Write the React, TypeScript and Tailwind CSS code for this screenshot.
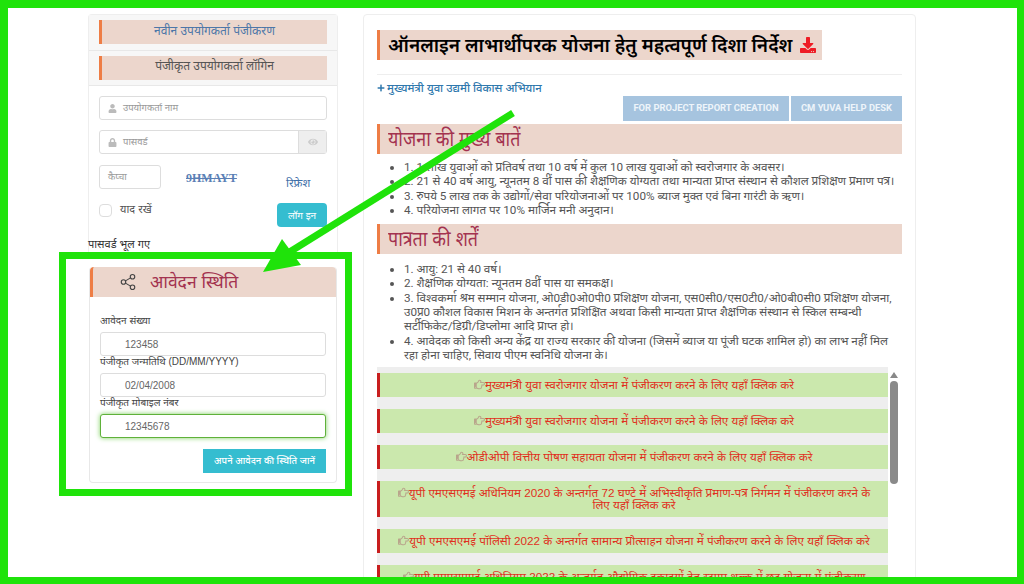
import { Share2 } from "lucide-react";
import { FaDownload, FaEye, FaLock, FaPlus, FaRegHandPointRight, FaUser } from "react-icons/fa";

const rows = [
  "मुख्यमंत्री युवा स्वरोजगार योजना में पंजीकरण करने के लिए यहाँ क्लिक करे",
  "मुख्यमंत्री युवा स्वरोजगार योजना में पंजीकरण करने के लिए यहाँ क्लिक करे",
  "ओडीओपी वित्तीय पोषण सहायता योजना में पंजीकरण करने के लिए यहाँ क्लिक करे",
  "यूपी एमएसएमई अधिनियम 2020 के अन्तर्गत 72 घण्टे में अभिस्वीकृति प्रमाण-पत्र निर्गमन में पंजीकरण करने के लिए यहाँ क्लिक करे",
  "यूपी एमएसएमई पॉलिसी 2022 के अन्तर्गत सामान्य प्रोत्साहन योजना में पंजीकरण करने के लिए यहाँ क्लिक करे",
  "यूपी एमएसएमई अधिनियम 2022 के अन्तर्गत औद्योगिक इकाइयों हेतु स्टाम्प शुल्क में छूट योजना में पंजीकरण करने",
];

const points = [
  "1. 1 लाख युवाओं को प्रतिवर्ष तथा 10 वर्ष में कुल 10 लाख युवाओं को स्वरोजगार के अवसर।",
  "2. 21 से 40 वर्ष आयु, न्यूनतम 8 वीं पास की शैक्षणिक योग्यता तथा मान्यता प्राप्त संस्थान से कौशल प्रशिक्षण प्रमाण पत्र।",
  "3. रुपये 5 लाख तक के उद्योगों/सेवा परियोजनाओं पर 100% ब्याज मुक्त एवं बिना गारंटी के ऋण।",
  "4. परियोजना लागत पर 10% मार्जिन मनी अनुदान।",
];

const terms = [
  "1. आयु: 21 से 40 वर्ष।",
  "2. शैक्षणिक योग्यता: न्यूनतम 8वीं पास या समकक्ष।",
  "3. विश्वकर्मा श्रम सम्मान योजना, ओ0डी0ओ0पी0 प्रशिक्षण योजना, एस0सी0/एस0टी0/ओ0बी0सी0 प्रशिक्षण योजना, उ0प्र0 कौशल विकास मिशन के अन्तर्गत प्रशिक्षित अथवा किसी मान्यता प्राप्त शैक्षणिक संस्थान से स्किल सम्बन्धी सर्टीफिकेट/डिग्री/डिप्लोमा आदि प्राप्त हो।",
  "4. आवेदक को किसी अन्य केंद्र या राज्य सरकार की योजना (जिसमें ब्याज या पूंजी घटक शामिल हो) का लाभ नहीं मिल रहा होना चाहिए, सिवाय पीएम स्वनिधि योजना के।",
];

function SectionHead({ children }: { children: string }) {
  return (
    <h2 className="h-[30px] border-l-[3px] border-[#ee7d45] bg-[#ecd6cc] pl-2 text-[21px] leading-[30px] text-[#a3324f]">
      <span className="inline-block origin-left scale-x-[0.85]">{children}</span>
    </h2>
  );
}

function BulletList({ items, className }: { items: string[]; className: string }) {
  return (
    <ul className={`list-disc pl-[27px] font-['Roboto','Noto_Sans',sans-serif] text-[11.7px] leading-[14.3px] text-[#555] ${className}`}>
      {items.map((t) => (
        <li key={t}>{t}</li>
      ))}
    </ul>
  );
}

function StatusField({ label, value, focus }: { label: string; value: string; focus?: boolean }) {
  return (
    <div>
      <div className="h-[17px] text-[10px] leading-[12px] text-[#444]">{label}</div>
      <div
        className={`flex h-[24px] items-center rounded-[3px] border bg-white pl-[24px] text-[10px] text-[#666] ${
          focus ? "border-[#5fb13a] shadow-[0_0_5px_#7fd060]" : "border-[#ddd]"
        }`}
      >
        {value}
      </div>
    </div>
  );
}

export default function App() {
  return (
    <div className="relative flex h-[584px] w-[1024px] gap-[25px] overflow-hidden bg-white pl-[88px] pt-[14px] font-['Liberation_Sans','Noto_Sans',sans-serif]">
      {/* left column */}
      <div className="w-[250px] shrink-0">
        <div className="h-[238px] rounded-t border-x border-t border-[#eee]">
          <div className="h-[36px] border-b border-[#e8e8e8] bg-[#f7f7f7] px-[10px] pt-[5px]">
            <div className="h-[24px] border-l-[3px] border-[#ee7d45] bg-[#ecd6cc] text-center text-[12px] leading-[22px] text-[#4d77a8]">
              नवीन उपयोगकर्ता पंजीकरण
            </div>
          </div>
          <div className="h-[35px] border-b border-[#e8e8e8] bg-[#f7f7f7] px-[10px] pt-[5px]">
            <div className="h-[24px] border-l-[3px] border-[#ee7d45] bg-[#ecd6cc] text-center text-[12px] leading-[21px] text-[#555]">
              पंजीकृत उपयोगकर्ता लॉगिन
            </div>
          </div>
          <div className="px-[10px] pt-[10px]">
            <div className="flex h-[24px] items-center gap-[6px] rounded-[3px] border border-[#ddd] pl-[8px] text-[9.5px] text-[#999]">
              <FaUser size={9} color="#bbb" />
              उपयोगकर्ता नाम
            </div>
            <div className="mt-[10px] flex h-[24px] items-center rounded-[3px] border border-[#ddd] pl-[8px] text-[9.5px] text-[#999]">
              <FaLock size={9} color="#bbb" />
              <span className="ml-[6px] flex-1">पासवर्ड</span>
              <span className="flex h-full w-[28px] items-center justify-center border-l border-[#ddd] bg-[#eee]">
                <FaEye size={10} color="#ccc" />
              </span>
            </div>
            <div className="mt-[11px] flex h-[24px]">
              <div className="flex w-[62px] items-center rounded-[3px] border border-[#ddd] pl-[8px] text-[9.5px] text-[#999]">
                कैप्चा
              </div>
              <span className="ml-[25px] font-['Liberation_Serif',serif] text-[12px] leading-[26px] font-bold text-[#5a7fb5] line-through">
                9HMAYT
              </span>
              <span className="ml-[49px] mt-[11px] text-[11.5px] leading-[14px] text-[#3f6fa8]">रिफ्रेश</span>
            </div>
            <div className="mt-[14px] flex h-[24px] justify-between">
              <div className="flex items-start gap-[8px]">
                <span className="mt-px h-[13px] w-[13px] rounded-sm border border-[#ddd]" />
                <span className="text-[11px] leading-[12px] text-[#555]">याद रखें</span>
              </div>
              <button type="button" className="h-[24px] w-[50px] rounded-sm bg-[#35bdd0] text-[10px] text-white">
                लॉग इन
              </button>
            </div>
          </div>
          <div className="-ml-px mt-[10px] text-[11px] leading-[14px] text-[#333]">पासवर्ड भूल गए</div>
        </div>

        <div className="ml-px mt-[15px] h-[216px] w-[248px] rounded border border-t-0 border-[#e8e8e8]">
          <div className="flex h-[30px] items-center rounded-t border-l-[3px] border-[#ee7d45] bg-[#ecd6cc] pl-[26px] text-[#a3324f]">
            <Share2 size={18} stroke="#444" strokeWidth={1.5} />
            <span className="ml-[13px] text-[17.5px]">आवेदन स्थिति</span>
          </div>
          <div className="px-[10px] pt-[18px]">
            <StatusField label="आवेदन संख्या" value="123458" />
            <StatusField label="पंजीकृत जन्मतिथि (DD/MM/YYYY)" value="02/04/2008" />
            <StatusField label="पंजीकृत मोबाइल नंबर" value="12345678" focus />
            <div className="mt-[11px] flex justify-end">
              <button type="button" className="h-[24px] w-[123px] bg-[#35bdd0] text-[9.5px] font-medium text-white">
                अपने आवेदन की स्थिति जानें
              </button>
            </div>
          </div>
        </div>
      </div>

      {/* right column */}
      <div className="h-[600px] w-[553px] shrink-0 rounded border border-[#eee] px-[13px] pt-[15px]">
        <div className="flex h-[30px] w-[445px] items-center whitespace-nowrap border-l-[3px] border-[#ee7d45] bg-[#ecd6cc] pl-2 font-['Noto_Sans',sans-serif] text-[19px] font-semibold text-black">
          ऑनलाइन लाभार्थीपरक योजना हेतु महत्वपूर्ण दिशा निर्देश
          <FaDownload size={16} color="#ee1c25" className="ml-2" />
        </div>
        <div className="mt-[14px] border-t border-[#eee]" />
        <div className="mt-[6px] flex items-center gap-[2px] text-[11.3px] leading-[14px] font-medium text-[#2f78ad]">
          <FaPlus size={8} />
          मुख्यमंत्री युवा उद्यमी विकास अभियान
        </div>
        <div className="mt-px flex justify-end gap-[2px]">
          <button type="button" className="h-[25px] w-[166px] bg-[#a6c4df] font-['Roboto',sans-serif] text-[9.4px] font-bold text-[#eef4fa]">
            FOR PROJECT REPORT CREATION
          </button>
          <button type="button" className="h-[25px] w-[111px] bg-[#a6c4df] font-['Roboto',sans-serif] text-[9.4px] font-bold text-[#eef4fa]">
            CM YUVA HELP DESK
          </button>
        </div>
        <div className="mt-[3px]">
          <SectionHead>योजना की मुख्य बातें</SectionHead>
        </div>
        <BulletList items={points} className="mt-[6px]" />
        <div className="mt-[7px]">
          <SectionHead>पात्रता की शर्तें</SectionHead>
        </div>
        <BulletList items={terms} className="mt-[8px] pr-[6px]" />
        <div className="mt-[5px] flex">
          <div className="flex h-[230px] w-[511px] shrink-0 flex-col gap-[12px] overflow-hidden bg-[#eeeeee] pt-[6px]">
            {rows.map((t, i) => (
              <div
                key={i}
                className="shrink-0 border-l-[3px] border-[#c81e1e] bg-[#cbe8ad] px-[11px] py-[6px] text-center text-[11.7px] leading-[12px] text-[#e0301e]"
              >
                <FaRegHandPointRight size={11} color="#b9a58c" className="inline align-[-1px]" />
                {t}
              </div>
            ))}
          </div>
          <div className="ml-[2px] w-[8px]">
            <div className="mx-auto mt-[5px] h-0 w-0 border-x-4 border-b-[6px] border-x-transparent border-b-[#888]" />
            <div className="mt-[3px] h-[103px] rounded bg-[#8a8a8a]" />
          </div>
        </div>
      </div>

      {/* annotation frame + highlight + arrow */}
      <div className="pointer-events-none absolute inset-0 border-t-[8px] border-r-[7px] border-b-[7px] border-l-[8px] border-[#1fe30a]" />
      <div className="pointer-events-none absolute left-[59px] top-[252px] h-[244px] w-[293px] border-[7px] border-[#1fe30a]" />
      <svg className="pointer-events-none absolute inset-0" width="1024" height="584" viewBox="0 0 1024 584">
        <path d="M513 113 L288 253" stroke="#1fe30a" strokeWidth="7" fill="none" />
        <path d="M263 272 L282 239 L301 265 Z" fill="#1fe30a" />
      </svg>
    </div>
  );
}
